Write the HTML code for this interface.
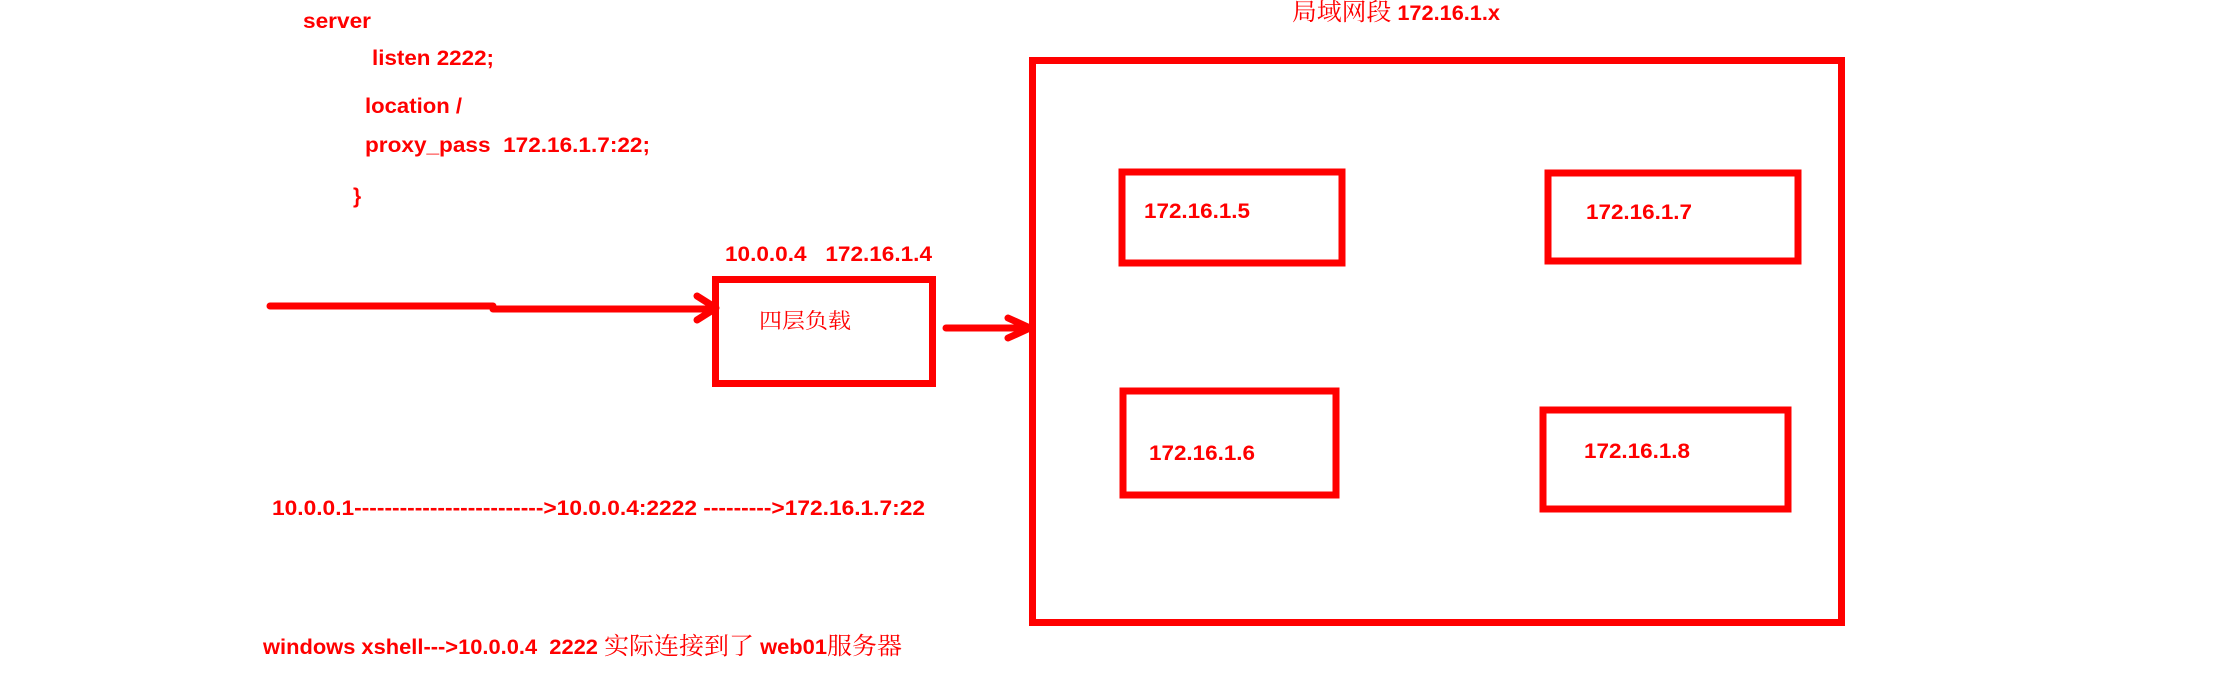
<!DOCTYPE html>
<html><head><meta charset="utf-8"><style>
html,body{margin:0;padding:0;background:#fff;width:2221px;height:682px;overflow:hidden}
svg{display:block}
text{font-family:"Liberation Sans","Noto Sans CJK SC",sans-serif;font-weight:bold;font-size:21px;fill:#ff0000}
.cjk{font-family:"Noto Serif CJK SC","Liberation Serif",serif;font-weight:normal}
</style></head><body>
<svg width="2221" height="682" viewBox="0 0 2221 682" xmlns="http://www.w3.org/2000/svg">
<g fill="none" stroke="#ff0000">
<rect x="715.5" y="279.5" width="217" height="104" stroke-width="7"/>
<rect x="1032.5" y="60.5" width="809" height="562" stroke-width="7"/>
<rect x="1122" y="172" width="220" height="91" stroke-width="7"/>
<rect x="1548" y="173" width="250" height="88" stroke-width="7"/>
<rect x="1123" y="391" width="213" height="104" stroke-width="7"/>
<rect x="1543" y="410" width="245" height="99" stroke-width="7"/>
<g stroke-width="7" stroke-linecap="round" stroke-linejoin="round">
<path d="M270 306 L493 306 M493 309 L715 309"/>
<path d="M697 296 L716 308 L697 320"/>
<path d="M946 328 L1028 328"/>
<path d="M1008 318 L1030 328 L1008 338"/>
</g>
</g>
<text x="303" y="28" textLength="68" lengthAdjust="spacingAndGlyphs">server</text>
<text x="372" y="65" textLength="122" lengthAdjust="spacingAndGlyphs">listen 2222;</text>
<text x="365" y="113" textLength="97" lengthAdjust="spacingAndGlyphs">location /</text>
<text x="365" y="152" textLength="285" lengthAdjust="spacingAndGlyphs" xml:space="preserve">proxy_pass  172.16.1.7:22;</text>
<text x="353" y="203">}</text>
<text x="725" y="261" textLength="207" lengthAdjust="spacingAndGlyphs" xml:space="preserve">10.0.0.4   172.16.1.4</text>
<text class="cjk" x="759" y="328" font-size="23" textLength="92" lengthAdjust="spacingAndGlyphs">四层负载</text>
<text x="1292" y="20" font-size="23" textLength="208" lengthAdjust="spacingAndGlyphs"><tspan class="cjk" font-size="24">局域网段</tspan> 172.16.1.x</text>
<text x="1144" y="218" textLength="106" lengthAdjust="spacingAndGlyphs">172.16.1.5</text>
<text x="1586" y="219" textLength="106" lengthAdjust="spacingAndGlyphs">172.16.1.7</text>
<text x="1149" y="460" textLength="106" lengthAdjust="spacingAndGlyphs">172.16.1.6</text>
<text x="1584" y="458" textLength="106" lengthAdjust="spacingAndGlyphs">172.16.1.8</text>
<text x="272" y="515" textLength="653" lengthAdjust="spacingAndGlyphs">10.0.0.1-------------------------&gt;10.0.0.4:2222 ---------&gt;172.16.1.7:22</text>
<text x="263" y="654" font-size="22" textLength="639" lengthAdjust="spacingAndGlyphs" xml:space="preserve">windows xshell---&gt;10.0.0.4  2222 <tspan class="cjk" font-size="24">实际连接到了</tspan> web01<tspan class="cjk" font-size="24">服务器</tspan></text>
</svg>
</body></html>
